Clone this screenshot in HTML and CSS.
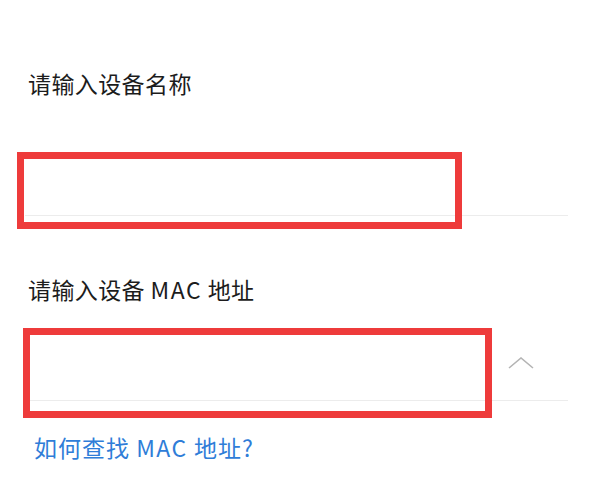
FILE: index.html
```html
<!DOCTYPE html>
<html lang="zh-CN">
<head>
  <meta charset="UTF-8">
  <meta name="viewport" content="width=device-width, initial-scale=1.0">
  <title>添加设备</title>
  <link rel="stylesheet" href="styles.css">
</head>
<body>
  <div class="page">
    <div class="field">
      <div class="label">请输入设备名称</div>
      <div class="input-row">
        <input type="text" class="input">
      </div>
    </div>

    <div class="field second">
      <div class="label">请输入设备 <span class="latin">MAC</span> 地址</div>
      <div class="input-row tall">
        <input type="text" class="input">
        <svg class="chevron" width="26" height="12" viewBox="0 0 26 12">
          <path d="M1 11 L13 1 L25 11" fill="none" stroke="#b4b4b4" stroke-width="1.6"/>
        </svg>
      </div>
    </div>

    <a class="help" href="#">如何查找 <span class="latin">MAC</span> 地址?</a>

    <!-- annotation boxes -->
    <div class="mark mark-name"></div>
    <div class="mark mark-mac"></div>
  </div>
</body>
</html>
```

FILE: styles.css
```css
body {
  margin: 0;
  background: #fff;
  font-family: "Noto Sans CJK SC", "Noto Sans", sans-serif;
}
.page {
  position: relative;
  height: 486px;
  padding: 67px 32px 0 28px;
  box-sizing: border-box;
}
.label {
  font-size: 23px;
  line-height: 32px;
  color: #1c1c1c;
  letter-spacing: 0.4px;
}
.latin {
  letter-spacing: 1.5px;
}
.input-row {
  display: flex;
  align-items: center;
  height: 56px;
  margin-top: 60px;
  margin-left: -3px;
  border-bottom: 1px solid #ececec;
}
.input-row.tall {
  height: 64px;
  margin-top: 31px;
}
.second {
  margin-top: 57px;
}
.input {
  flex: 1;
  border: none;
  outline: none;
  background: transparent;
  font-size: 18px;
}
.chevron {
  margin: 0 34px 10px 0;
}
.help {
  display: block;
  margin: 30px 0 0 6px;
  font-size: 23px;
  line-height: 32px;
  color: #2f7dd8;
  letter-spacing: 1px;
  text-decoration: none;
}
.mark {
  position: absolute;
  border: 7px solid #ee3b3b;
  box-sizing: border-box;
}
.mark-name {
  left: 17px;
  top: 152px;
  width: 445px;
  height: 77px;
}
.mark-mac {
  left: 23px;
  top: 328px;
  width: 469px;
  height: 90px;
}
```
